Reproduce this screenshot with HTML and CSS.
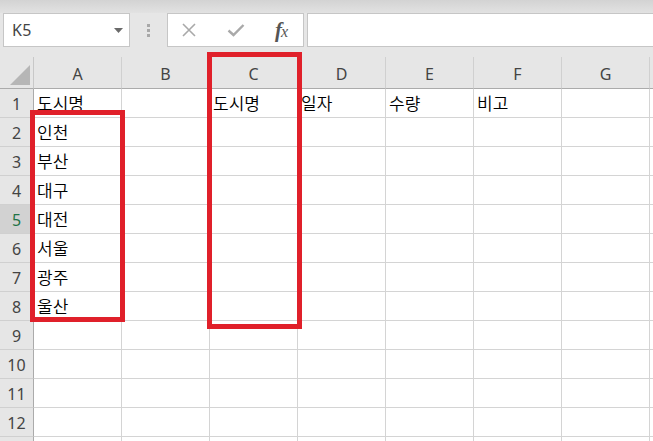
FILE: index.html
```html
<!DOCTYPE html>
<html lang="ko">
<head>
<meta charset="utf-8">
<link rel="stylesheet" href="styles.css">
</head>
<body>
<div class="app">
  <div class="top-strip"></div>
  <div class="formula-row">
    <div class="namebox">
      <span class="ref">K5</span>
      <svg class="dd" width="9" height="5" viewBox="0 0 9 5"><path d="M0 0h9L4.5 5z" fill="#6a6a6a"/></svg>
    </div>
    <div class="grip"><span></span><span></span><span></span></div>
    <div class="fbuttons">
      <svg class="btn" width="16" height="16" viewBox="0 0 16 16"><path d="M2 2L14 14M14 2L2 14" stroke="#a9a9a9" stroke-width="1.6" fill="none"/></svg>
      <svg class="btn" width="18" height="16" viewBox="0 0 18 16"><path d="M1.5 8.5L6.5 13L16.5 3" stroke="#a9a9a9" stroke-width="2.4" fill="none"/></svg>
      <span class="fx">f<i>x</i></span>
    </div>
    <div class="finput"></div>
  </div>
  <div class="gap-strip"></div>
  <div class="sheet">
    <div class="grid">
      <div class="corner"><svg width="20" height="20" viewBox="0 0 20 20"><path d="M20 0V20H0z" fill="#b6b6b6"/></svg></div>
      <div class="ch">A</div><div class="ch">B</div><div class="ch">C</div><div class="ch">D</div><div class="ch">E</div><div class="ch">F</div><div class="ch">G</div><div class="ch"></div>

      <div class="rh">1</div><div class="c">도시명</div><div class="c"></div><div class="c">도시명</div><div class="c">일자</div><div class="c">수량</div><div class="c">비고</div><div class="c"></div><div class="c"></div>
      <div class="rh">2</div><div class="c">인천</div><div class="c"></div><div class="c"></div><div class="c"></div><div class="c"></div><div class="c"></div><div class="c"></div><div class="c"></div>
      <div class="rh">3</div><div class="c">부산</div><div class="c"></div><div class="c"></div><div class="c"></div><div class="c"></div><div class="c"></div><div class="c"></div><div class="c"></div>
      <div class="rh">4</div><div class="c">대구</div><div class="c"></div><div class="c"></div><div class="c"></div><div class="c"></div><div class="c"></div><div class="c"></div><div class="c"></div>
      <div class="rh active">5</div><div class="c">대전</div><div class="c"></div><div class="c"></div><div class="c"></div><div class="c"></div><div class="c"></div><div class="c"></div><div class="c"></div>
      <div class="rh">6</div><div class="c">서울</div><div class="c"></div><div class="c"></div><div class="c"></div><div class="c"></div><div class="c"></div><div class="c"></div><div class="c"></div>
      <div class="rh">7</div><div class="c">광주</div><div class="c"></div><div class="c"></div><div class="c"></div><div class="c"></div><div class="c"></div><div class="c"></div><div class="c"></div>
      <div class="rh">8</div><div class="c">울산</div><div class="c"></div><div class="c"></div><div class="c"></div><div class="c"></div><div class="c"></div><div class="c"></div><div class="c"></div>
      <div class="rh">9</div><div class="c"></div><div class="c"></div><div class="c"></div><div class="c"></div><div class="c"></div><div class="c"></div><div class="c"></div><div class="c"></div>
      <div class="rh">10</div><div class="c"></div><div class="c"></div><div class="c"></div><div class="c"></div><div class="c"></div><div class="c"></div><div class="c"></div><div class="c"></div>
      <div class="rh">11</div><div class="c"></div><div class="c"></div><div class="c"></div><div class="c"></div><div class="c"></div><div class="c"></div><div class="c"></div><div class="c"></div>
      <div class="rh">12</div><div class="c"></div><div class="c"></div><div class="c"></div><div class="c"></div><div class="c"></div><div class="c"></div><div class="c"></div><div class="c"></div>
      <div class="rh"></div><div class="c"></div><div class="c"></div><div class="c"></div><div class="c"></div><div class="c"></div><div class="c"></div><div class="c"></div><div class="c"></div>
    </div>
    <div class="mark mark-a"></div>
    <div class="mark mark-c"></div>
  </div>
</div>
</body>
</html>
```

FILE: styles.css
```css
* { box-sizing: border-box; }
html, body { margin: 0; padding: 0; }
body {
  width: 653px;
  height: 441px;
  overflow: hidden;
  background: #ffffff;
  font-family: "Noto Sans", "Noto Sans CJK KR", sans-serif;
}
.app { width: 653px; height: 441px; overflow: hidden; background: #e6e6e6; }
.top-strip {
  height: 13px;
  background: linear-gradient(#d3d3d3, #e2e2e2);
}
.formula-row {
  height: 34px;
  display: flex;
  align-items: stretch;
  padding-left: 3px;
  background: #e6e6e6;
}
.namebox {
  width: 127px;
  background: #fff;
  border: 1px solid #c6c6c6;
  display: flex;
  align-items: center;
  justify-content: space-between;
  padding: 0 6px 0 8px;
}
.ref { font-size: 16px; color: #444; letter-spacing: 0.3px; }
.dd { margin-top: 1px; }
.grip {
  width: 37px;
  display: flex;
  flex-direction: column;
  align-items: center;
  justify-content: center;
  gap: 2px;
}
.grip span { width: 3px; height: 3px; background: #a8a8a8; }
.fbuttons {
  width: 137px;
  background: #fff;
  border: 1px solid #c6c6c6;
  display: flex;
  align-items: center;
  justify-content: space-between;
  padding: 0 16px 0 13px;
}
.fx {
  font-family: "Liberation Serif", serif;
  font-style: italic;
  font-size: 21px;
  color: #555;
  font-weight: bold;
  letter-spacing: -1px;
}
.fx i { font-size: 16px; font-style: italic; font-weight: normal; }
.finput {
  flex: 1;
  margin-left: 3px;
  background: #fff;
  border: 1px solid #c6c6c6;
  border-right: none;
}
.gap-strip { height: 10px; background: #e6e6e6; }
.sheet { position: relative; background: #fff; }
.grid {
  display: grid;
  grid-template-columns: 34px repeat(7, 88px) 1fr;
  grid-template-rows: 32px repeat(13, 29px);
}
.corner {
  background: #e6e6e6;
  border-right: 1px solid #c8c8c8;
  border-bottom: 1px solid #ababab;
  display: flex;
  align-items: flex-end;
  justify-content: flex-end;
  padding: 0 3px 3px 0;
}
.ch {
  background: #e6e6e6;
  border-right: 1px solid #d0d0d0;
  border-bottom: 1px solid #ababab;
  font-size: 16px;
  color: #444;
  display: flex;
  align-items: center;
  justify-content: center;
  padding-top: 2px;
}
.rh {
  background: #e6e6e6;
  border-right: 1px solid #ababab;
  border-bottom: 1px solid #d0d0d0;
  font-size: 16px;
  color: #444;
  display: flex;
  align-items: center;
  justify-content: center;
  padding-top: 1px;
}
.rh.active { background: #d2d2d2; color: #217346; }
.c {
  border-right: 1px solid #d4d4d4;
  border-bottom: 1px solid #d4d4d4;
  font-family: "Noto Sans CJK KR", sans-serif;
  font-weight: 350;
  font-size: 17px;
  color: #000;
  padding: 0 0 0 3px;
  line-height: 28px;
  white-space: nowrap;
}
.mark {
  position: absolute;
  border: 5px solid #e0202a;
}
.mark-a { left: 30px; top: 53px; width: 95px; height: 212px; }
.mark-c { left: 207px; top: -5px; width: 95px; height: 277px; }
```
